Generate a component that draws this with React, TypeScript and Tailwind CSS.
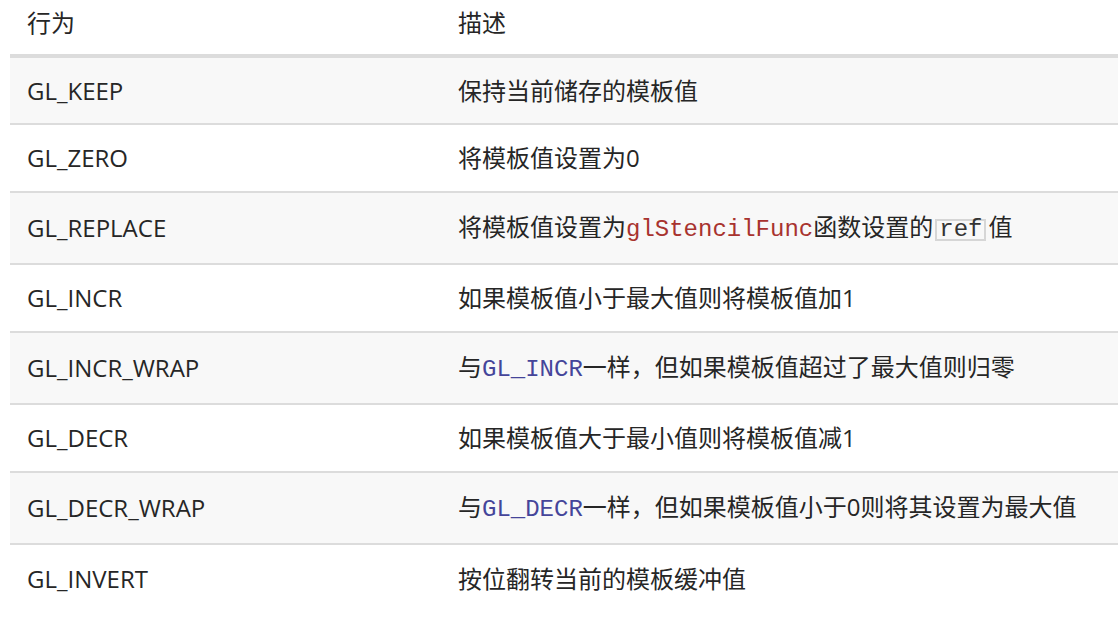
const ROWS: { name: string; desc: React.ReactNode; tall?: boolean }[] = [
  { name: 'GL_KEEP', desc: '保持当前储存的模板值' },
  { name: 'GL_ZERO', desc: '将模板值设置为0' },
  {
    name: 'GL_REPLACE',
    tall: true,
    desc: (
      <>
        将模板值设置为<code className="font-['Liberation_Mono',monospace] text-[#a8332f]">glStencilFunc</code>
        函数设置的
        <code className="mx-[2px] inline-block border-2 border-[#d6d6d6] px-[2px] font-['Liberation_Mono',monospace] leading-[18px] text-[#333]">
          ref
        </code>
        值
      </>
    ),
  },
  { name: 'GL_INCR', desc: '如果模板值小于最大值则将模板值加1' },
  {
    name: 'GL_INCR_WRAP',
    tall: true,
    desc: (
      <>
        与<code className="font-['Liberation_Mono',monospace] text-[#45459a]">GL_INCR</code>一样，但如果模板值超过了最大值则归零
      </>
    ),
  },
  { name: 'GL_DECR', desc: '如果模板值大于最小值则将模板值减1' },
  {
    name: 'GL_DECR_WRAP',
    tall: true,
    desc: (
      <>
        与<code className="font-['Liberation_Mono',monospace] text-[#45459a]">GL_DECR</code>一样，但如果模板值小于0则将其设置为最大值
      </>
    ),
  },
  { name: 'GL_INVERT', desc: '按位翻转当前的模板缓冲值' },
];

export default function App() {
  return (
    <div className="h-[618px] w-[1118px] overflow-hidden bg-white font-['Open_Sans','Noto_Sans_CJK_SC',sans-serif] text-[24px] text-[#262626]">
      <table className="ml-[10px] w-[1108px] border-collapse">
        <thead>
          <tr className="h-[56px] border-b-4 border-[#dcdcdc]">
            <th className="w-[448px] pb-[8px] pl-[17px] text-left font-normal">行为</th>
            <th className="pb-[8px] text-left font-normal">描述</th>
          </tr>
        </thead>
        <tbody>
          {ROWS.map((row, i) => (
            <tr
              key={row.name}
              className={`${i < ROWS.length - 1 ? 'border-b-2 border-[#dcdcdc]' : ''} ${
                i % 2 === 0 ? 'bg-[#f8f8f8]' : 'bg-white'
              } ${row.tall ? 'h-[72px]' : 'h-[68px]'}`}
            >
              <td className="pl-[17px]">{row.name}</td>
              <td>{row.desc}</td>
            </tr>
          ))}
        </tbody>
      </table>
    </div>
  );
}
